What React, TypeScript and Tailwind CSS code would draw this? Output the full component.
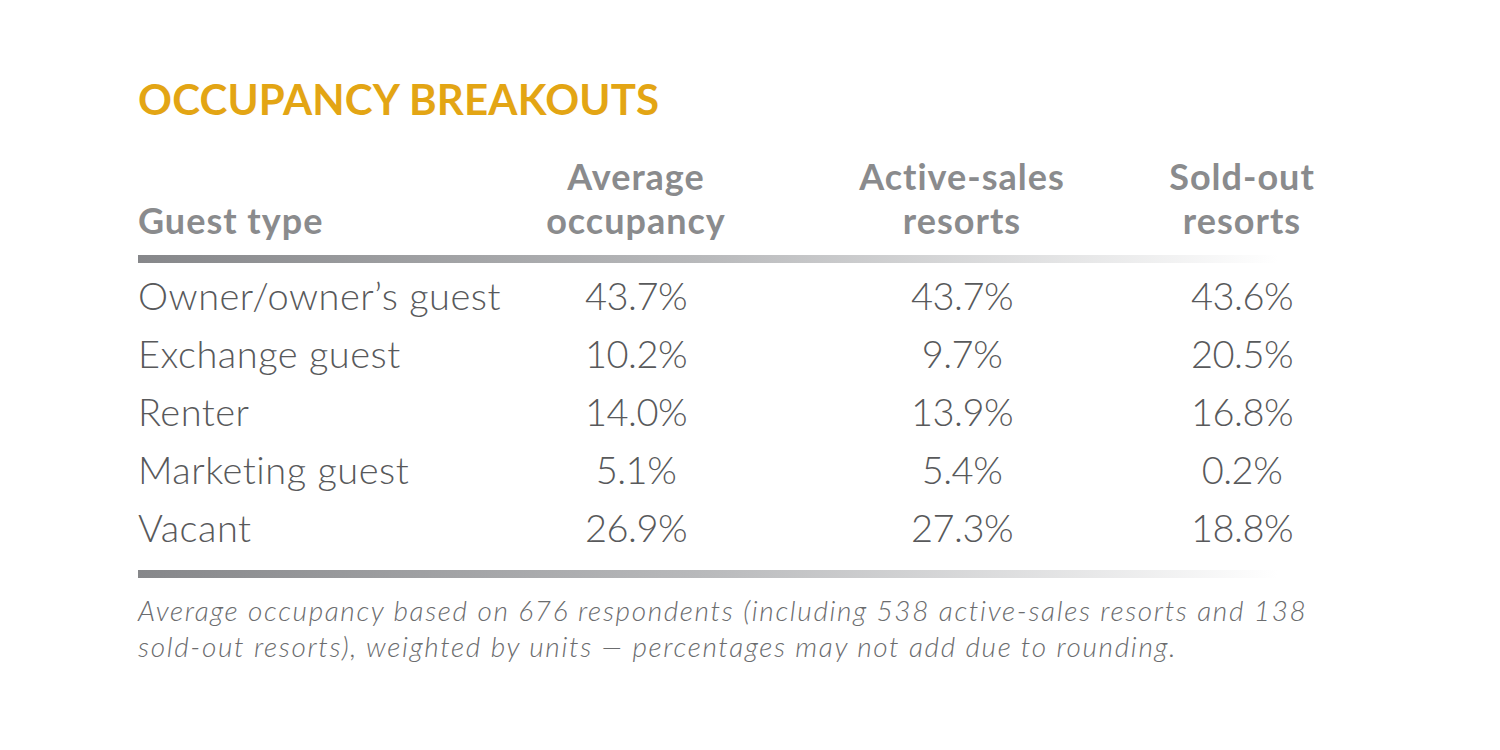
import React from 'react';

interface Row {
  type: string;
  avg: string;
  active: string;
  soldOut: string;
}

const rows: Row[] = [
  { type: 'Owner/owner’s guest', avg: '43.7%', active: '43.7%', soldOut: '43.6%' },
  { type: 'Exchange guest', avg: '10.2%', active: '9.7%', soldOut: '20.5%' },
  { type: 'Renter', avg: '14.0%', active: '13.9%', soldOut: '16.8%' },
  { type: 'Marketing guest', avg: '5.1%', active: '5.4%', soldOut: '0.2%' },
  { type: 'Vacant', avg: '26.9%', active: '27.3%', soldOut: '18.8%' },
];

const cols = 'grid grid-cols-[368px_260px_392px_168px]';

const Bar: React.FC = () => (
  <div className="h-2 w-[1140px] bg-gradient-to-r from-[#86878a] via-[#b9babc] to-white" />
);

const App: React.FC = () => {
  return (
    <div className="w-[1500px] h-[750px] bg-white pl-[138px] pt-[75px] font-['Lato','Liberation_Sans',sans-serif]">
      <h1 className="text-[42px] leading-[48px] font-bold tracking-[0.2px] text-[#e3a514]">
        OCCUPANCY BREAKOUTS
      </h1>

      <div className={`${cols} mt-[31px] text-[36px] leading-[44px] font-bold tracking-[1px] text-[#8a8b8d] items-end pb-[13px]`}>
        <div>Guest type</div>
        <div className="text-center">Average<br />occupancy</div>
        <div className="text-center">Active-sales<br />resorts</div>
        <div className="text-center">Sold-out<br />resorts</div>
      </div>

      <Bar />

      <div className="pt-[3px] pb-[14px]">
        {rows.map(r => (
          <div key={r.type} className={`${cols} h-[58px] items-center text-[38px] font-light tracking-[0.5px] text-[#58595b]`}>
            <div>{r.type}</div>
            <div className="text-center tracking-[-0.5px]">{r.avg}</div>
            <div className="text-center tracking-[-0.5px]">{r.active}</div>
            <div className="text-center tracking-[-0.5px]">{r.soldOut}</div>
          </div>
        ))}
      </div>

      <Bar />

      <p className="mt-[14px] w-[1200px] text-[28px] leading-[36px] italic font-light tracking-[1.65px] text-[#6b6c6e]">
        Average occupancy based on 676 respondents (including 538 active-sales resorts and 138 sold-out resorts), weighted by units — percentages may not add due to rounding.
      </p>
    </div>
  );
};

export default App;
